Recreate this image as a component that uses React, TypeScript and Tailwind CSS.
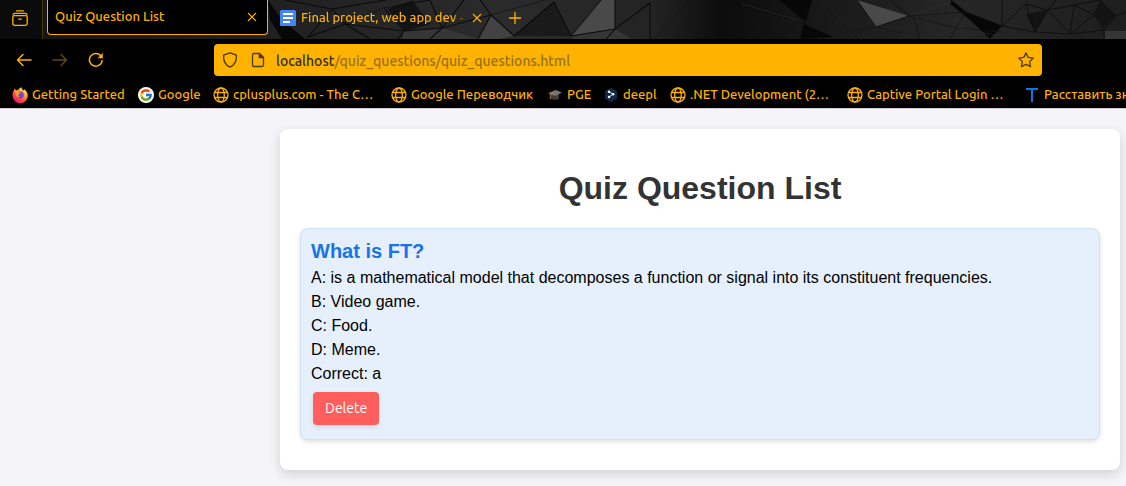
import type { ReactNode } from "react";
import { FcGoogle } from "react-icons/fc";

const answers = [
  "A: is a mathematical model that decomposes a function or signal into its constituent frequencies.",
  "B: Video game.",
  "C: Food.",
  "D: Meme.",
  "Correct: a",
];

function FacetBackdrop() {
  return (
    <svg
      className="absolute inset-0 h-full w-full"
      viewBox="0 0 1126 39"
      preserveAspectRatio="xMinYMin slice"
      aria-hidden="true"
    >
      <defs>
        <linearGradient id="facets" x1="0" x2="1" y1="0" y2="0">
          <stop offset="0" stopColor="#141414" />
          <stop offset="0.24" stopColor="#202020" />
          <stop offset="0.45" stopColor="#2b2b2b" />
          <stop offset="0.58" stopColor="#232323" />
          <stop offset="0.64" stopColor="#0c0c0c" />
          <stop offset="0.72" stopColor="#171717" />
          <stop offset="0.85" stopColor="#262626" />
          <stop offset="1" stopColor="#1e1e1e" />
        </linearGradient>
      </defs>
      <rect width="1126" height="39" fill="url(#facets)" />
      <path d="M268 0 282 20 305 39 282 39 270 20ZM780 0 812 0 806 22ZM804 24 833 37 800 39ZM951 0 966 12 1002 26 990 39 970 20 950 4Z" fill="#070707" />
      <path d="M388 9 412 0 430 24 405 31ZM1026 14 1048 10 1035 32ZM1100 0 1116 15 1104 28 1094 14Z" fill="#131313" />
      <path d="M601 0H615V29L571 36ZM857 0 909 16 876 27Z" fill="#494949" />
      <path d="M491 15 514 36 500 39 478 39Z" fill="#424242" />
      <path d="M571 36 615 29 632 39H572ZM402 31 442 28 478 39H403ZM1105 31H1126V39H1105Z" fill="#363636" />
      <path d="M514 36 554 2 571 36Z" fill="#1a1a1a" />
      <path
        d="M285 0 332 9 386 0M332 9 308 37 345 24 404 31 442 28 491 15 480 0M332 9 345 24 370 39M345 24 384 8 404 31 398 39M384 8 430 0 442 28 430 39M442 28 464 0M491 15 514 36 554 2M491 15 478 39M554 2 571 36 601 0M571 36 615 29 650 3M615 0V29L606 39M650 3V39M728 0 741 5V39"
        fill="none"
        stroke="#0b0b0b"
        strokeWidth="1.1"
      />
      <path
        d="M741 5 804 23 780 0M804 23 812 0M804 23 800 39M804 23 822 39M857 0 876 27 909 16 890 0M966 12 951 0M966 12 1002 26V0M1002 26 1026 4 1048 10 1035 32 1002 26M1026 4 1035 32M1048 10 1074 5 1094 15 1104 30 1070 34 1048 10M1074 5 1070 34 1035 32M1048 10 1056 0M1074 5 1100 0M1094 15 1070 34M1104 30 1116 16 1126 12M1116 16 1100 0M1104 30V39"
        fill="none"
        stroke="#0d0d0d"
        strokeWidth="0.9"
      />
      <path d="M491 15 545 0M690 0 655 39M741 5 774 39M820 0 860 39M876 27 850 32M876 27 902 33M909 16 966 12M909 16 956 28 966 12M956 28 950 39M956 28 1002 32M913 16 920 39" fill="none" stroke="#141414" strokeWidth="0.8" />
      <path d="M412 0 382 9 346 23M572 35 600 0M821 0 862 39M742 4 803 22M910 15 952 2M957 28 1001 36" fill="none" stroke="#313131" strokeWidth="0.6" />
      <path d="M0 0H42V39H0Z" fill="#0b0b0b" />
    </svg>
  );
}

function GlobeIcon() {
  return (
    <svg viewBox="0 0 16 16" className="size-4" fill="none" stroke="currentColor" strokeWidth="1.3" aria-hidden="true">
      <circle cx="8" cy="8" r="7" />
      <ellipse cx="8" cy="8" rx="3.3" ry="7" />
      <path d="M1.5 5.5h13M1.5 10.5h13" />
    </svg>
  );
}

function FirefoxIcon() {
  return (
    <svg viewBox="0 0 16 16" className="size-4" aria-hidden="true">
      <defs>
        <linearGradient id="flame" x1="0.85" y1="0.05" x2="0.2" y2="0.95">
          <stop offset="0" stopColor="#fff44f" />
          <stop offset="0.35" stopColor="#ffa22c" />
          <stop offset="0.65" stopColor="#ff4b3c" />
          <stop offset="1" stopColor="#e4157e" />
        </linearGradient>
      </defs>
      <path d="M9.4.2c.3 1.8 1.5 2.5 2.5 3.5l.5-1.4c2 1.6 3.4 4 3.4 6.3A7.500 7.500 0 0 1 .5 8.600C.4 6.500 1 4.800 2 3.300l.3-1.900 1.600 1.700 1.900.1C6.800 1.700 8 1 9.400.2Z" fill="url(#flame)" />
      <circle cx="8.3" cy="8" r="3.4" fill="#7042d8" />
      <path d="M2 4.500c1.700-1 3.700-.5 4.900.8l1.800.2c-.4 1.200-1.700 1.200-2.200 1.900-.6 1 .2 2.500 1.800 2.500-2.600 1.500-5.300-1.200-4.500-3.800Z" fill="#ff9a2c" />
    </svg>
  );
}

function GoogleIcon() {
  return (
    <span className="flex size-4 items-center justify-center rounded-full bg-white">
      <FcGoogle className="size-3.5" aria-hidden="true" />
    </span>
  );
}

function CapIcon() {
  return (
    <svg viewBox="0 0 16 16" className="size-4" aria-hidden="true">
      <path d="M4 7v4.500c2 1.700 6 1.700 8 0V7Z" fill="#3d3d3d" />
      <path d="M1 6.300 8.500 3 15 5.500 8.500 9Z" fill="#747474" />
      <path d="M7.500 6 3.300 7.600V12" fill="none" stroke="#c58b2b" strokeWidth="0.9" />
    </svg>
  );
}

function DeeplIcon() {
  return (
    <svg viewBox="0 0 16 16" className="size-4" aria-hidden="true">
      <path d="M8 .8 14 4.200v7.300L9.500 14v1.700L7.500 14.500 2 11.500V4.200Z" fill="#0f2b46" />
      <path d="m6 4.800 4 2.300-4 3" fill="none" stroke="#fff" strokeWidth="0.9" />
      <circle cx="6" cy="4.800" r="1.2" fill="#fff" />
      <circle cx="10.200" cy="7.200" r="1.2" fill="#fff" />
      <circle cx="6" cy="10" r="1.2" fill="#fff" />
    </svg>
  );
}

function LetterTIcon() {
  return (
    <svg viewBox="0 0 16 16" className="size-4" fill="none" stroke="#0a78e8" strokeWidth="2" aria-hidden="true">
      <path d="M2 2h12M8 2v13" />
    </svg>
  );
}

function CloseIcon() {
  return (
    <svg viewBox="0 0 10 10" className="size-2.5" fill="none" stroke="currentColor" strokeWidth="1.1" aria-hidden="true">
      <path d="m1 1 8 8M9 1 1 9" />
    </svg>
  );
}

function Bookmark({ icon, label, width }: { icon: ReactNode; label: string; width: string }) {
  return (
    <a href="#" className={`flex shrink-0 items-center gap-1 whitespace-nowrap ${width}`}>
      <span className="shrink-0">{icon}</span>
      {label}
    </a>
  );
}

function TabStrip() {
  return (
    <div className="relative h-[39px] overflow-hidden">
      <FacetBackdrop />
      <div className="relative flex h-full items-start">
        <div className="flex h-full w-[43px] items-center border-r border-[#4a3505] pb-1 pl-3">
          <button type="button" aria-label="Firefox View">
            <svg viewBox="0 0 16 16" className="size-4" fill="none" stroke="currentColor" strokeWidth="1.3" strokeLinecap="round" aria-hidden="true">
              <path d="M4.500.9h7M1 4.800C1.200 3.800 1.800 3.300 2.600 3.300h10.800c.8 0 1.400.5 1.600 1.500" />
              <rect x="0.8" y="5.600" width="14.400" height="9.700" rx="1.800" />
              <path d="M6.800 9.200h2.400" />
            </svg>
          </button>
        </div>
        <div className="ml-1 flex h-[35px] w-[221px] items-center justify-between rounded-b border border-t-0 border-[#ffb000] bg-black pr-2 pl-[7px]">
          <span>Quiz Question List</span>
          <button type="button" aria-label="Close Quiz Question List" className="p-0.5">
            <CloseIcon />
          </button>
        </div>
        <div className="ml-3 flex h-[35px] items-center">
          <svg viewBox="0 0 16 16" className="mr-[5px] size-4 shrink-0" aria-hidden="true">
            <rect width="16" height="16" rx="1.500" fill="#4285f4" />
            <path d="M3 4h10M3 8h10M3 12h7" stroke="#fff" strokeWidth="1.800" />
          </svg>
          <span className="w-[165px] whitespace-nowrap [mask-image:linear-gradient(to_right,black_92%,transparent)]">
            Final project, web app dev -
          </span>
          <button type="button" aria-label="Close Final project" className="ml-1 p-0.5">
            <CloseIcon />
          </button>
          <button type="button" aria-label="New tab" className="ml-6">
            <svg viewBox="0 0 14 14" className="size-3.5" fill="none" stroke="currentColor" strokeWidth="1.3" aria-hidden="true">
              <path d="M7 1v12M1 7h12" />
            </svg>
          </button>
        </div>
      </div>
    </div>
  );
}

function Toolbar() {
  return (
    <div className="flex items-center pt-[5px] pr-[84px] pb-1">
      <div className="flex w-[214px] shrink-0 items-center gap-5 pl-4">
        <button type="button" aria-label="Back">
          <svg viewBox="0 0 16 16" className="size-4" fill="none" stroke="currentColor" strokeWidth="1.500" strokeLinecap="round" strokeLinejoin="round" aria-hidden="true">
            <path d="M15 8H1.500M7 2.500 1.500 8 7 13.500" />
          </svg>
        </button>
        <button type="button" aria-label="Forward" disabled className="opacity-40">
          <svg viewBox="0 0 16 16" className="size-4" fill="none" stroke="currentColor" strokeWidth="1.500" strokeLinecap="round" strokeLinejoin="round" aria-hidden="true">
            <path d="M1 8h13.500M9 2.500 14.500 8 9 13.500" />
          </svg>
        </button>
        <button type="button" aria-label="Reload">
          <svg viewBox="0 0 16 16" className="size-4" fill="none" stroke="currentColor" strokeWidth="1.500" strokeLinecap="round" aria-hidden="true">
            <path d="M14.200 8.500A6.400 6.400 0 1 1 12.600 3.500" />
            <path d="M14.800 1v5.200H9.600Z" fill="currentColor" stroke="none" />
          </svg>
        </button>
      </div>
      <div className="flex h-8 flex-1 items-center rounded bg-[#ffb300] px-2 text-sm text-[#4a3b12]">
        <svg viewBox="0 0 16 16" className="size-4 shrink-0" fill="none" stroke="currentColor" strokeWidth="1.3" strokeLinejoin="round" aria-hidden="true">
          <path d="M8 .8 14.400 3.200c.3 5.300-1.800 9.900-6.400 12C3.400 13.100 1.300 8.500 1.600 3.200Z" />
        </svg>
        <svg viewBox="0 0 16 16" className="ml-3 size-4 shrink-0" fill="none" stroke="currentColor" strokeWidth="1.3" strokeLinejoin="round" aria-hidden="true">
          <path d="M4 1.500h5.500l4 4V13c0 1-.5 1.500-1.500 1.500H4c-1 0-1.500-.5-1.500-1.500V3c0-1 .5-1.500 1.500-1.500Z" />
          <path d="M9.300 1.500v4.200h4.200Z" fill="currentColor" />
        </svg>
        <div className="ml-2.5 flex-1 whitespace-nowrap pt-px text-[#987018]">
          <span className="text-[#332b18]">localhost</span>/quiz_questions/quiz_questions.html
        </div>
        <button type="button" aria-label="Bookmark this page">
          <svg viewBox="0 0 16 16" className="size-4" fill="none" stroke="currentColor" strokeWidth="1.3" strokeLinejoin="round" aria-hidden="true">
            <path d="m8 .9 2.200 4.500 5 .7-3.600 3.500.9 5L8 12.300l-4.500 2.300.9-5L.8 6.100l5-.7Z" />
          </svg>
        </button>
      </div>
    </div>
  );
}

function Bookmarks() {
  return (
    <nav aria-label="Bookmarks" className="flex h-7 items-center overflow-hidden pt-px pl-3 font-medium">
      <Bookmark icon={<FirefoxIcon />} label="Getting Started" width="w-[126px]" />
      <Bookmark icon={<GoogleIcon />} label="Google" width="w-[75px]" />
      <Bookmark icon={<GlobeIcon />} label="cplusplus.com - The C…" width="w-[178px]" />
      <Bookmark icon={<GlobeIcon />} label="Google Переводчик" width="w-[156px]" />
      <Bookmark icon={<CapIcon />} label="PGE" width="w-[56px]" />
      <Bookmark icon={<DeeplIcon />} label="deepl" width="w-[67px]" />
      <Bookmark icon={<GlobeIcon />} label=".NET Development (2…" width="w-[177px]" />
      <Bookmark icon={<GlobeIcon />} label="Captive Portal Login …" width="w-[177px]" />
      <Bookmark icon={<LetterTIcon />} label="Расставить знаки" width="w-[177px]" />
    </nav>
  );
}

export default function App() {
  return (
    <div className="flex min-h-screen flex-col bg-[#f4f4f9]">
      <header className="border-b border-[#cfcbd0] bg-black font-['Ubuntu','Noto_Sans',sans-serif] text-[13px] font-medium text-[#ffb000]">
        <TabStrip />
        <Toolbar />
        <Bookmarks />
      </header>
      <main className="flex-1 overflow-hidden pt-5 pr-1.5 pb-4 pl-[280px] font-['Liberation_Sans',Arial,sans-serif]">
        <section className="rounded-lg bg-white px-5 pt-[39px] pb-[30px] shadow-[0_4px_12px_rgba(0,0,0,0.15)]">
          <h1 className="mb-5 text-center text-[32px] leading-10 font-bold text-[#333333]">Quiz Question List</h1>
          <article className="rounded-lg border border-[#d0e2f4] bg-[#e6f0fc] p-2.5 pb-3 text-base leading-6 text-black shadow-[0_2px_5px_rgba(0,0,0,0.12)]">
            <h2 className="mb-[3px] text-xl leading-6 font-bold text-[#1a73e8]">What is FT?</h2>
            {answers.map((answer) => (
              <p key={answer}>{answer}</p>
            ))}
            <button
              type="button"
              className="m-0.5 mt-1.5 block rounded bg-[#ff5e5e] px-3 py-1.5 font-['Ubuntu','Noto_Sans',sans-serif] text-sm leading-[21px] text-white shadow-[0_2px_4px_rgba(0,0,0,0.1)]"
            >
              Delete
            </button>
          </article>
        </section>
      </main>
    </div>
  );
}
